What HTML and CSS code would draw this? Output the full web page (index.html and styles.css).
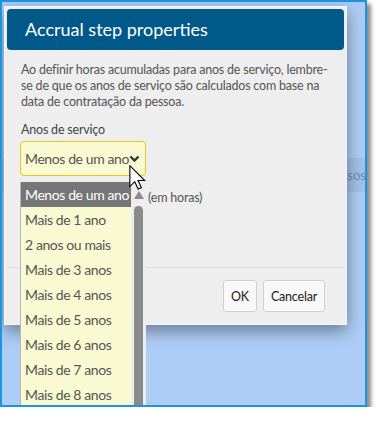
FILE: index.html
```html
<!DOCTYPE html>
<html lang="pt-BR">
<head>
    <meta charset="UTF-8">
    <meta name="viewport" content="width=device-width, initial-scale=1.0">
    <title>Accrual step properties</title>
    <link rel="stylesheet" href="styles.css">
</head>
<body>
    <div class="frame">
        <!-- Página por trás do diálogo -->
        <div class="pagina">
            <div class="faixa"><span>Processos</span></div>
        </div>

        <!-- Diálogo -->
        <div class="dialogo">
            <div class="cabecalho">Accrual step properties</div>
            <div class="corpo">
                <p class="aviso">Ao definir horas acumuladas para anos de serviço, lembre-se de que os anos de serviço são calculados com base na data de contratação da pessoa.</p>
                <label class="rotulo" for="anos">Anos de serviço</label>
                <div class="select" id="anos">
                    <span>Menos de um ano</span>
                    <svg class="seta" width="11" height="8" viewBox="0 0 11 8"><polyline points="1.5,1.5 5.5,5.5 9.5,1.5" fill="none" stroke="#333" stroke-width="2.4"/></svg>
                </div>
                <!-- o começo do rótulo fica por baixo da lista aberta -->
                <div class="rotulo horas"><span class="oculto"></span>(em horas)</div>
            </div>
            <div class="rodape">
                <button class="botao">OK</button>
                <button class="botao">Cancelar</button>
            </div>
        </div>

        <!-- Lista aberta do select -->
        <div class="lista">
            <div class="opcoes">
                <div class="opcao selecionada">Menos de um ano</div>
                <div class="opcao">Mais de 1 ano</div>
                <div class="opcao">2 anos ou mais</div>
                <div class="opcao">Mais de 3 anos</div>
                <div class="opcao">Mais de 4 anos</div>
                <div class="opcao">Mais de 5 anos</div>
                <div class="opcao">Mais de 6 anos</div>
                <div class="opcao">Mais de 7 anos</div>
                <div class="opcao">Mais de 8 anos</div>
            </div>
            <div class="rolagem">
                <svg class="seta-cima" width="10" height="8" viewBox="0 0 10 8"><polygon points="5,0 10,8 0,8" fill="#8a8a8a"/></svg>
                <div class="polegar"></div>
            </div>
        </div>

        <!-- Cursor do mouse -->
        <svg class="cursor" width="17" height="25" viewBox="0 0 12 18">
            <path d="M0.5,0.5 L0.5,15.5 L4,12 L6.5,17.3 L8.8,16.3 L6.4,11.2 L11.2,11.2 Z" fill="#fff" stroke="#000" stroke-width="0.8" stroke-linejoin="miter"/>
        </svg>
    </div>
</body>
</html>
```

FILE: styles.css
```css
body {
    margin: 0;
    background: #fff;
    font-family: Lato, "Open Sans", sans-serif;
}
.frame {
    position: relative;
    box-sizing: border-box;
    width: 367px;
    height: 407px;
    border: 2px solid #1b95dd;
    background: #aecdf6;
    box-shadow: 4px 4px 4px rgba(0, 0, 0, 0.45);
    overflow: hidden;
}
.pagina {
    padding-top: 156px;
}
.faixa {
    height: 34px;
    background: #a3c1ea;
    display: flex;
    align-items: center;
    justify-content: flex-end;
    font-size: 13px;
    color: #6f8db6;
}
.faixa span {
    margin-right: -1px;
}
.dialogo {
    position: absolute;
    left: 2px;
    top: 4px;
    box-sizing: border-box;
    width: 343px;
    height: 319px;
    padding: 2px;
    border: 1px solid #f7f7f7;
    background: #eeeeee;
    box-shadow: 0 6px 16px rgba(0, 0, 0, 0.4);
    display: flex;
    flex-direction: column;
}
.cabecalho {
    height: 41px;
    line-height: 41px;
    padding-left: 18px;
    border-radius: 4px;
    background: #01598a;
    color: #fff;
    font-size: 18px;
}
.corpo {
    flex: 1;
    padding: 12px 6px 0 14px;
}
.aviso {
    margin: 0;
    font-size: 12.5px;
    letter-spacing: -0.2px;
    line-height: 16px;
    color: #555;
}
.rotulo {
    display: block;
    margin-top: 12px;
    font-size: 12.5px;
    letter-spacing: -0.2px;
    line-height: 16px;
    color: #444;
}
.select {
    box-sizing: border-box;
    width: 126px;
    height: 35px;
    margin: 3px 0 0 -1px;
    padding: 0 5px 0 4px;
    border: 1px solid #f0c21d;
    border-radius: 4px;
    background: #fafad2;
    display: flex;
    align-items: center;
    justify-content: space-between;
    font-size: 14px;
    letter-spacing: -0.4px;
    color: #555;
    white-space: nowrap;
}
.horas {
    margin-top: 14px;
    color: #555;
}
.oculto {
    display: inline-block;
    width: 127px;
}
.rodape {
    height: 55px;
    box-sizing: border-box;
    border-top: 1px solid #dcdcdc;
    padding: 12px 19px 0 0;
    display: flex;
    justify-content: flex-end;
    align-items: flex-start;
    gap: 6px;
}
.botao {
    height: 32px;
    padding: 0 7px;
    border: 1px solid #cfcfcf;
    border-radius: 3px;
    background: #f8f8f8;
    font-family: inherit;
    font-size: 12.5px;
    letter-spacing: -0.2px;
    color: #222;
}
.lista {
    position: absolute;
    left: 18px;
    top: 180px;
    width: 126px;
    height: 225px;
    box-sizing: border-box;
    border-left: 1px solid #b5b5b5;
    background: #fafad2;
    display: flex;
}
.opcoes {
    flex: 1;
    min-width: 0;
}
.opcao {
    height: 25px;
    line-height: 25px;
    padding-left: 4px;
    font-size: 14px;
    letter-spacing: -0.4px;
    color: #555;
    white-space: nowrap;
    overflow: hidden;
}
.selecionada {
    background: #767676;
    color: #fff;
}
.rolagem {
    width: 15px;
    background: #ededed;
    display: flex;
    flex-direction: column;
    align-items: center;
}
.seta-cima {
    margin-top: 9px;
}
.polegar {
    width: 9px;
    flex: 1;
    margin-top: 7px;
    border-radius: 5px 5px 0 0;
    background: #8a8a8a;
}
.cursor {
    position: absolute;
    left: 127px;
    top: 163px;
}
```
